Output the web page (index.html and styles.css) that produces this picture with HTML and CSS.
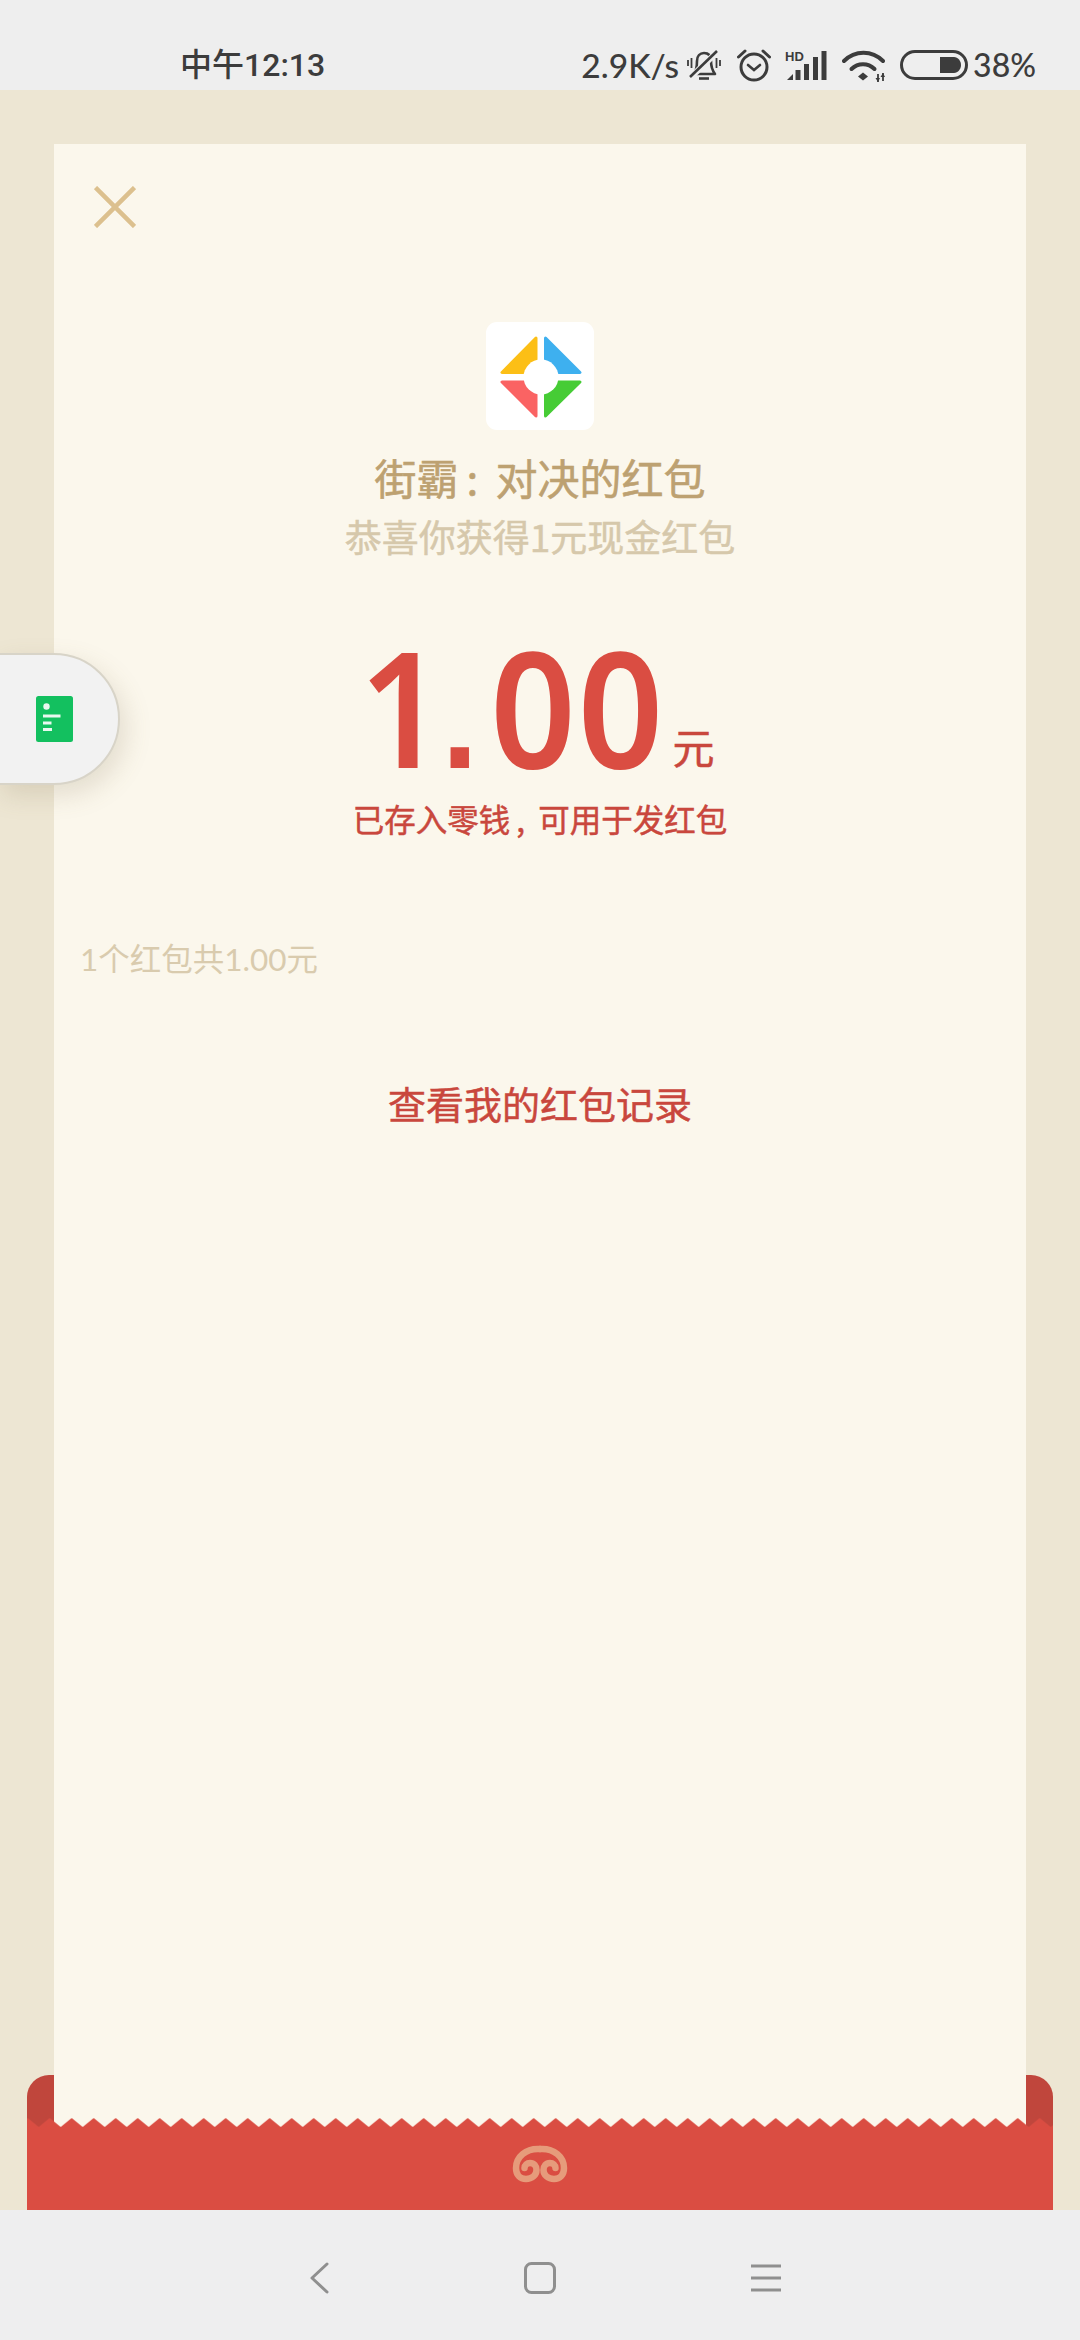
FILE: index.html
```html
<!DOCTYPE html>
<html lang="zh-CN">
<head>
<meta charset="utf-8">
<title>红包</title>
<link rel="stylesheet" href="styles.css">
</head>
<body>
<div class="phone">
  <header class="status">
    <span class="time">中午12:13</span>
    <div class="status-right">
      <span class="speed">2.9K/s</span>
      <svg class="i-bell" width="34" height="32" viewBox="0 0 34 32" fill="none" stroke="#3c3c3c" stroke-width="2.6">
        <path d="M7 25 C9.5 21 10 17 10 12 C10 7 13 4 17 4 C21.500 4 24 7 24 12 C24 17 25 21 28 25 Z" stroke-linejoin="round"/>
        <path d="M3 29 L31 2" stroke="#eeeeee" stroke-width="6"/>
        <path d="M3 28 L30 2"/>
        <path d="M1 11 V17 M4.500 9 V19 M29.500 9 V19 M33 11 V17" stroke-width="1.800"/>
        <path d="M12 29.500 H22" stroke-width="2.600"/>
      </svg>
      <svg class="i-alarm" width="34" height="34" viewBox="0 0 34 34" fill="none" stroke="#3c3c3c" stroke-width="3" stroke-linecap="round">
        <circle cx="17" cy="19" r="13"/>
        <path d="M1.500 9 L8 3 M26 3 L32.500 9"/>
        <path d="M11 17 L17 22 L23 17" stroke-width="2.600"/>
      </svg>
      <svg class="i-signal" width="42" height="31" viewBox="0 0 42 31">
        <text class="hd" x="0" y="11">HD</text>
        <path d="M2 30 L8 24 V30 Z" fill="#3c3c3c"/>
        <rect x="10.500" y="20" width="5" height="10" fill="#3c3c3c"/>
        <rect x="19" y="14" width="5" height="16" fill="#3c3c3c"/>
        <rect x="28" y="7" width="5" height="23" fill="#3c3c3c"/>
        <rect x="36.500" y="1" width="5" height="29" fill="#3c3c3c"/>
      </svg>
      <svg class="i-wifi" width="43" height="33" viewBox="0 0 43 33" fill="none" stroke="#3c3c3c" stroke-width="4" stroke-linecap="round">
        <path d="M2 12 C13 1 30 1 41 12"/>
        <path d="M9.500 20 C16 13.500 26 13.500 32.500 20"/>
        <path d="M16 27.500 L21 23.500 L26 27.500 L21 31.500 Z" fill="#3c3c3c" stroke="none"/>
        <path d="M36 25 V33 M41 24 V32" stroke-width="1.800" stroke-linecap="butt"/>
        <path d="M33.500 29 L36 33 L38 29 Z M38.500 28 L41 24 L43 28 Z" fill="#3c3c3c" stroke="none"/>
      </svg>
      <svg class="i-batt" width="68" height="30" viewBox="0 0 68 30" fill="none">
        <rect x="1.500" y="1.500" width="65" height="27" rx="13.500" stroke="#3c3c3c" stroke-width="3"/>
        <path d="M40 7 H54 C58 7 61 11 61 15 C61 19 58 23 54 23 H40 Z" fill="#3c3c3c"/>
      </svg>
      <span class="pct">38%</span>
    </div>
  </header>

  <main class="page">
    <div class="env-back"></div>
    <section class="card">
      <svg class="close" width="42" height="42" viewBox="0 0 42 42" fill="none" stroke="#dcc08e" stroke-width="4.500">
        <path d="M1.500 1.500 L40.500 40.500 M40.500 1.500 L1.500 40.500"/>
      </svg>
      <div class="head">
        <svg class="logo" width="108" height="108" viewBox="0 0 108 108">
          <rect width="108" height="108" rx="11" fill="#ffffff"/>
          <g stroke-width="3" stroke-linejoin="round">
            <path d="M50 16 L16 50.500 H50 Z" fill="#fcbf16" stroke="#fcbf16"/>
            <path d="M59.500 16 L94 50.500 H59.500 Z" fill="#3eb0ef" stroke="#3eb0ef"/>
            <path d="M50 94 L16 60 H50 Z" fill="#fa6363" stroke="#fa6363"/>
            <path d="M59.500 94 L94 60 H59.500 Z" fill="#46cc35" stroke="#46cc35"/>
          </g>
          <circle cx="55" cy="55" r="17.500" fill="#ffffff"/>
        </svg>
        <h1 class="title">街霸<span class="colon">:</span>对决的红包</h1>
        <p class="sub">恭喜你获得1元现金红包</p>
        <div class="amount"><span class="num">1<span class="dot">.</span>00</span><span class="unit">元</span></div>
        <p class="note">已存入零钱<span class="comma">,</span>可用于发红包</p>
      </div>
      <p class="count">1个红包共1.00元</p>
      <p class="record">查看我的红包记录</p>
    </section>
    <div class="env-front">
      <svg class="zig" width="1026" height="92" viewBox="0 0 1026 92">
        <defs>
          <pattern id="zz" x="0.700" y="0" width="22" height="92" patternUnits="userSpaceOnUse">
            <path d="M0 0 L11 9 L22 0 V92 H0 Z" fill="#da4d42"/>
          </pattern>
        </defs>
        <rect width="1026" height="92" fill="url(#zz)"/>
      </svg>
      <svg class="cloud" width="56" height="40" viewBox="0 0 56 40" fill="none" stroke="#e69b7b" stroke-width="6.500" stroke-linecap="round">
        <path d="M28 6 C14 5 4 14 4 25 C4 32 8 36 14 36 C20 36 24.500 32 24.500 27 C24.500 23 22 20 18 20 C15 20 12.500 22 12.500 25"/>
        <path d="M28 6 C42 5 52 14 52 25 C52 32 48 36 42 36 C36 36 31.500 32 31.500 27 C31.500 23 34 20 38 20 C41 20 43.500 22 43.500 25"/>
      </svg>
    </div>
    <aside class="pill">
      <svg width="37" height="46" viewBox="0 0 37 46">
        <rect width="37" height="46" rx="2.500" fill="#13c05f"/>
        <circle cx="10.500" cy="10.500" r="3.200" fill="#e9f8ef"/>
        <path d="M7 20 H24.500 M7 27 H15.500 M7 33.500 H16" stroke="#e9f8ef" stroke-width="3"/>
      </svg>
    </aside>
  </main>

  <nav class="nav">
    <svg width="20" height="32" viewBox="0 0 20 32" fill="none" stroke="#8f8f8f" stroke-width="3" stroke-linecap="round" stroke-linejoin="round"><path d="M18 2 L3 16 L18 30"/></svg>
    <svg width="32" height="32" viewBox="0 0 32 32" fill="none" stroke="#8f8f8f" stroke-width="3"><rect x="1.500" y="1.500" width="29" height="29" rx="6"/></svg>
    <svg width="30" height="28" viewBox="0 0 30 28" fill="none" stroke="#8f8f8f" stroke-width="3"><path d="M0 2 H30 M0 14 H30 M0 26 H30"/></svg>
  </nav>
</div>
</body>
</html>
```

FILE: styles.css
```css
* { box-sizing: border-box; margin: 0; padding: 0; }
html, body { width: 1080px; height: 2340px; overflow: hidden; }
body { font-family: "Noto Sans CJK SC", "Noto Sans", sans-serif; background: #eeeeee; }
.phone { width: 1080px; height: 2340px; display: flex; flex-direction: column; }

.status { height: 90px; background: #eeeeee; display: flex; align-items: center; justify-content: space-between; padding: 40px 44px 0 180px; color: #3c3c3c; flex: none; }
.time { font-family: Roboto, "Noto Sans CJK SC", sans-serif; font-size: 32px; font-weight: 500; line-height: 40px; }
.status-right { display: flex; align-items: center; }
.speed, .pct { font-family: Lato, "Noto Sans", sans-serif; font-size: 32px; font-weight: 500; line-height: 40px; }
.speed { font-size: 33.5px; }
.i-bell { margin-left: 8px; }
.i-alarm { margin-left: 16px; }
.i-signal { margin-left: 14px; }
.i-wifi { margin-left: 15px; }
.i-batt { margin-left: 15px; }
.pct { margin-left: 5px; }
.hd { font-family: "Liberation Sans", sans-serif; font-size: 13px; font-weight: 700; fill: #3c3c3c; }

.page { flex: 1; position: relative; background: #ede6d3; padding: 54px 54px 0; overflow: hidden; }
.env-back { position: absolute; left: 27px; right: 27px; bottom: 0; height: 135px; background: #c0463c; border-radius: 22px 22px 0 0; }
.card { position: relative; height: 1984px; background: #fbf7ec; padding: 42px 0 0 40px; display: flex; flex-direction: column; align-items: flex-start; }
.close { display: block; flex: none; }
.head { width: 972px; margin-left: -40px; margin-top: 94px; display: flex; flex-direction: column; align-items: center; }
.logo { display: block; }
.title { font-size: 42px; font-weight: 400; -webkit-text-stroke: 0.6px #bda171; line-height: 56px; color: #bda171; margin-top: 19px; }
.colon { display: inline-block; width: 37px; padding-left: 8px; }
.sub { font-size: 37px; font-weight: 400; -webkit-text-stroke: 0.5px #d6c8ab; line-height: 50px; color: #d6c8ab; margin-top: 6px; }
.amount { display: flex; align-items: baseline; margin: 65px 0 0 -6px; color: #da4d42; height: 160px; }
.num { display: inline-block; font-family: "Noto Sans", Roboto, sans-serif; font-size: 161px; font-weight: 600; line-height: 160px; letter-spacing: 2px; transform: scaleX(0.93); transform-origin: left center; margin-right: -23px; }
.dot { font-family: "Liberation Sans", sans-serif; font-size: 140px; font-weight: 700; margin: 0 11px 0 -5px; }
.unit { font-size: 42px; font-weight: 400; -webkit-text-stroke: 0.5px #c9473d; line-height: 50px; margin-left: 7px; color: #c9473d; transform: translateY(-4px); }
.note { font-size: 31.5px; font-weight: 400; -webkit-text-stroke: 0.5px #c9473d; line-height: 44px; color: #c9473d; margin-top: 10px; }
.comma { display: inline-block; width: 28px; padding-left: 6px; }
.count { font-family: Lato, "Noto Sans CJK SC", sans-serif; font-size: 31.5px; line-height: 44px; color: #d9cbae; margin-left: -14px; margin-top: 97px; }
.record { font-size: 38px; font-weight: 400; -webkit-text-stroke: 0.5px #c9473d; line-height: 54px; color: #c9473d; width: 972px; margin-left: -40px; margin-top: 95px; text-align: center; }

.env-front { position: absolute; left: 27px; right: 27px; bottom: 0; height: 92px; display: flex; justify-content: center; }
.zig { position: absolute; left: 0; top: 0; display: block; }
.cloud { position: relative; margin-top: 25px; }

.pill { position: absolute; left: -4px; top: 563px; width: 124px; height: 132px; background: #f2f2f2; border: 2px solid #d8d4c8; border-radius: 0 66px 66px 0; box-shadow: 6px 10px 26px rgba(120, 105, 70, 0.18); display: flex; align-items: center; padding-left: 38px; }
.pill svg { display: block; }

.nav { height: 130px; flex: none; background: #eeeeef; display: flex; align-items: center; gap: 195px; padding: 6px 0 0 309px; }
```
